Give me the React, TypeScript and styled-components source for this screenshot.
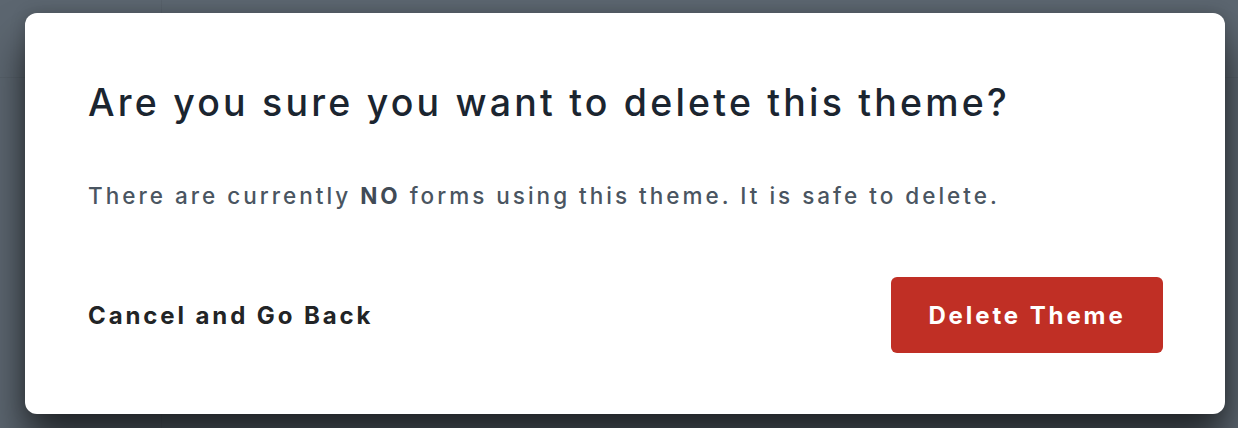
import React from "react";
import styled, { createGlobalStyle } from "styled-components";

const GlobalStyle = createGlobalStyle`
  html, body {
    margin: 0;
    padding: 0;
  }
  body {
    font-family: Inter, "Open Sans", "Liberation Sans", sans-serif;
    -webkit-font-smoothing: antialiased;
  }
`;

const Backdrop = styled.div`
  width: 1238px;
  height: 428px;
  overflow: hidden;
  background-color: #5c6670;
  background-image:
    linear-gradient(to bottom, transparent 77px, rgba(0, 0, 0, 0.05) 77px, rgba(0, 0, 0, 0.05) 78px, transparent 78px),
    linear-gradient(to right, transparent 161px, rgba(0, 0, 0, 0.05) 161px, rgba(0, 0, 0, 0.05) 162px, transparent 162px);
  padding: 13px 13px 0 25px;
  box-sizing: border-box;
`;

const Modal = styled.div`
  width: 1200px;
  height: 401px;
  box-sizing: border-box;
  background: #ffffff;
  border-radius: 12px;
  box-shadow: 0 30px 40px rgba(0, 0, 0, 0.6), 0 0 16px rgba(0, 0, 0, 0.2);
  padding: 68px 62px 0 63px;
  display: flex;
  flex-direction: column;
`;

const Title = styled.h2`
  margin: 0;
  font-size: 37.5px;
  font-weight: 450;
  line-height: 44px;
  letter-spacing: 3.2px;
  color: #1b2530;
  white-space: nowrap;
`;

const Message = styled.p`
  margin: 56px 0 0;
  font-size: 22.5px;
  font-weight: 550;
  line-height: 30px;
  letter-spacing: 3px;
  color: #4a5561;
  white-space: nowrap;

  strong {
    font-weight: 750;
    color: #414b56;
  }
`;

const Actions = styled.div`
  margin-top: 66px;
  display: flex;
  align-items: center;
  justify-content: space-between;
`;

const LinkButton = styled.button`
  border: 0;
  background: none;
  padding: 0;
  font-family: inherit;
  font-size: 24px;
  font-weight: 700;
  letter-spacing: 2.9px;
  color: #222426;
  cursor: pointer;
`;

const DangerButton = styled.button`
  width: 272px;
  height: 76px;
  border: 0;
  border-radius: 6px;
  background: #c02f25;
  color: #ffffff;
  font-family: inherit;
  font-size: 24px;
  font-weight: 700;
  letter-spacing: 2.9px;
  cursor: pointer;
`;

export default function App() {
  return (
    <>
      <GlobalStyle />
      <Backdrop>
        <Modal role="dialog" aria-modal="true">
          <Title>Are you sure you want to delete this theme?</Title>
          <Message>
            There are currently <strong>NO</strong> forms using this theme. It is safe to delete.
          </Message>
          <Actions>
            <LinkButton type="button">Cancel and Go Back</LinkButton>
            <DangerButton type="button">Delete Theme</DangerButton>
          </Actions>
        </Modal>
      </Backdrop>
    </>
  );
}
